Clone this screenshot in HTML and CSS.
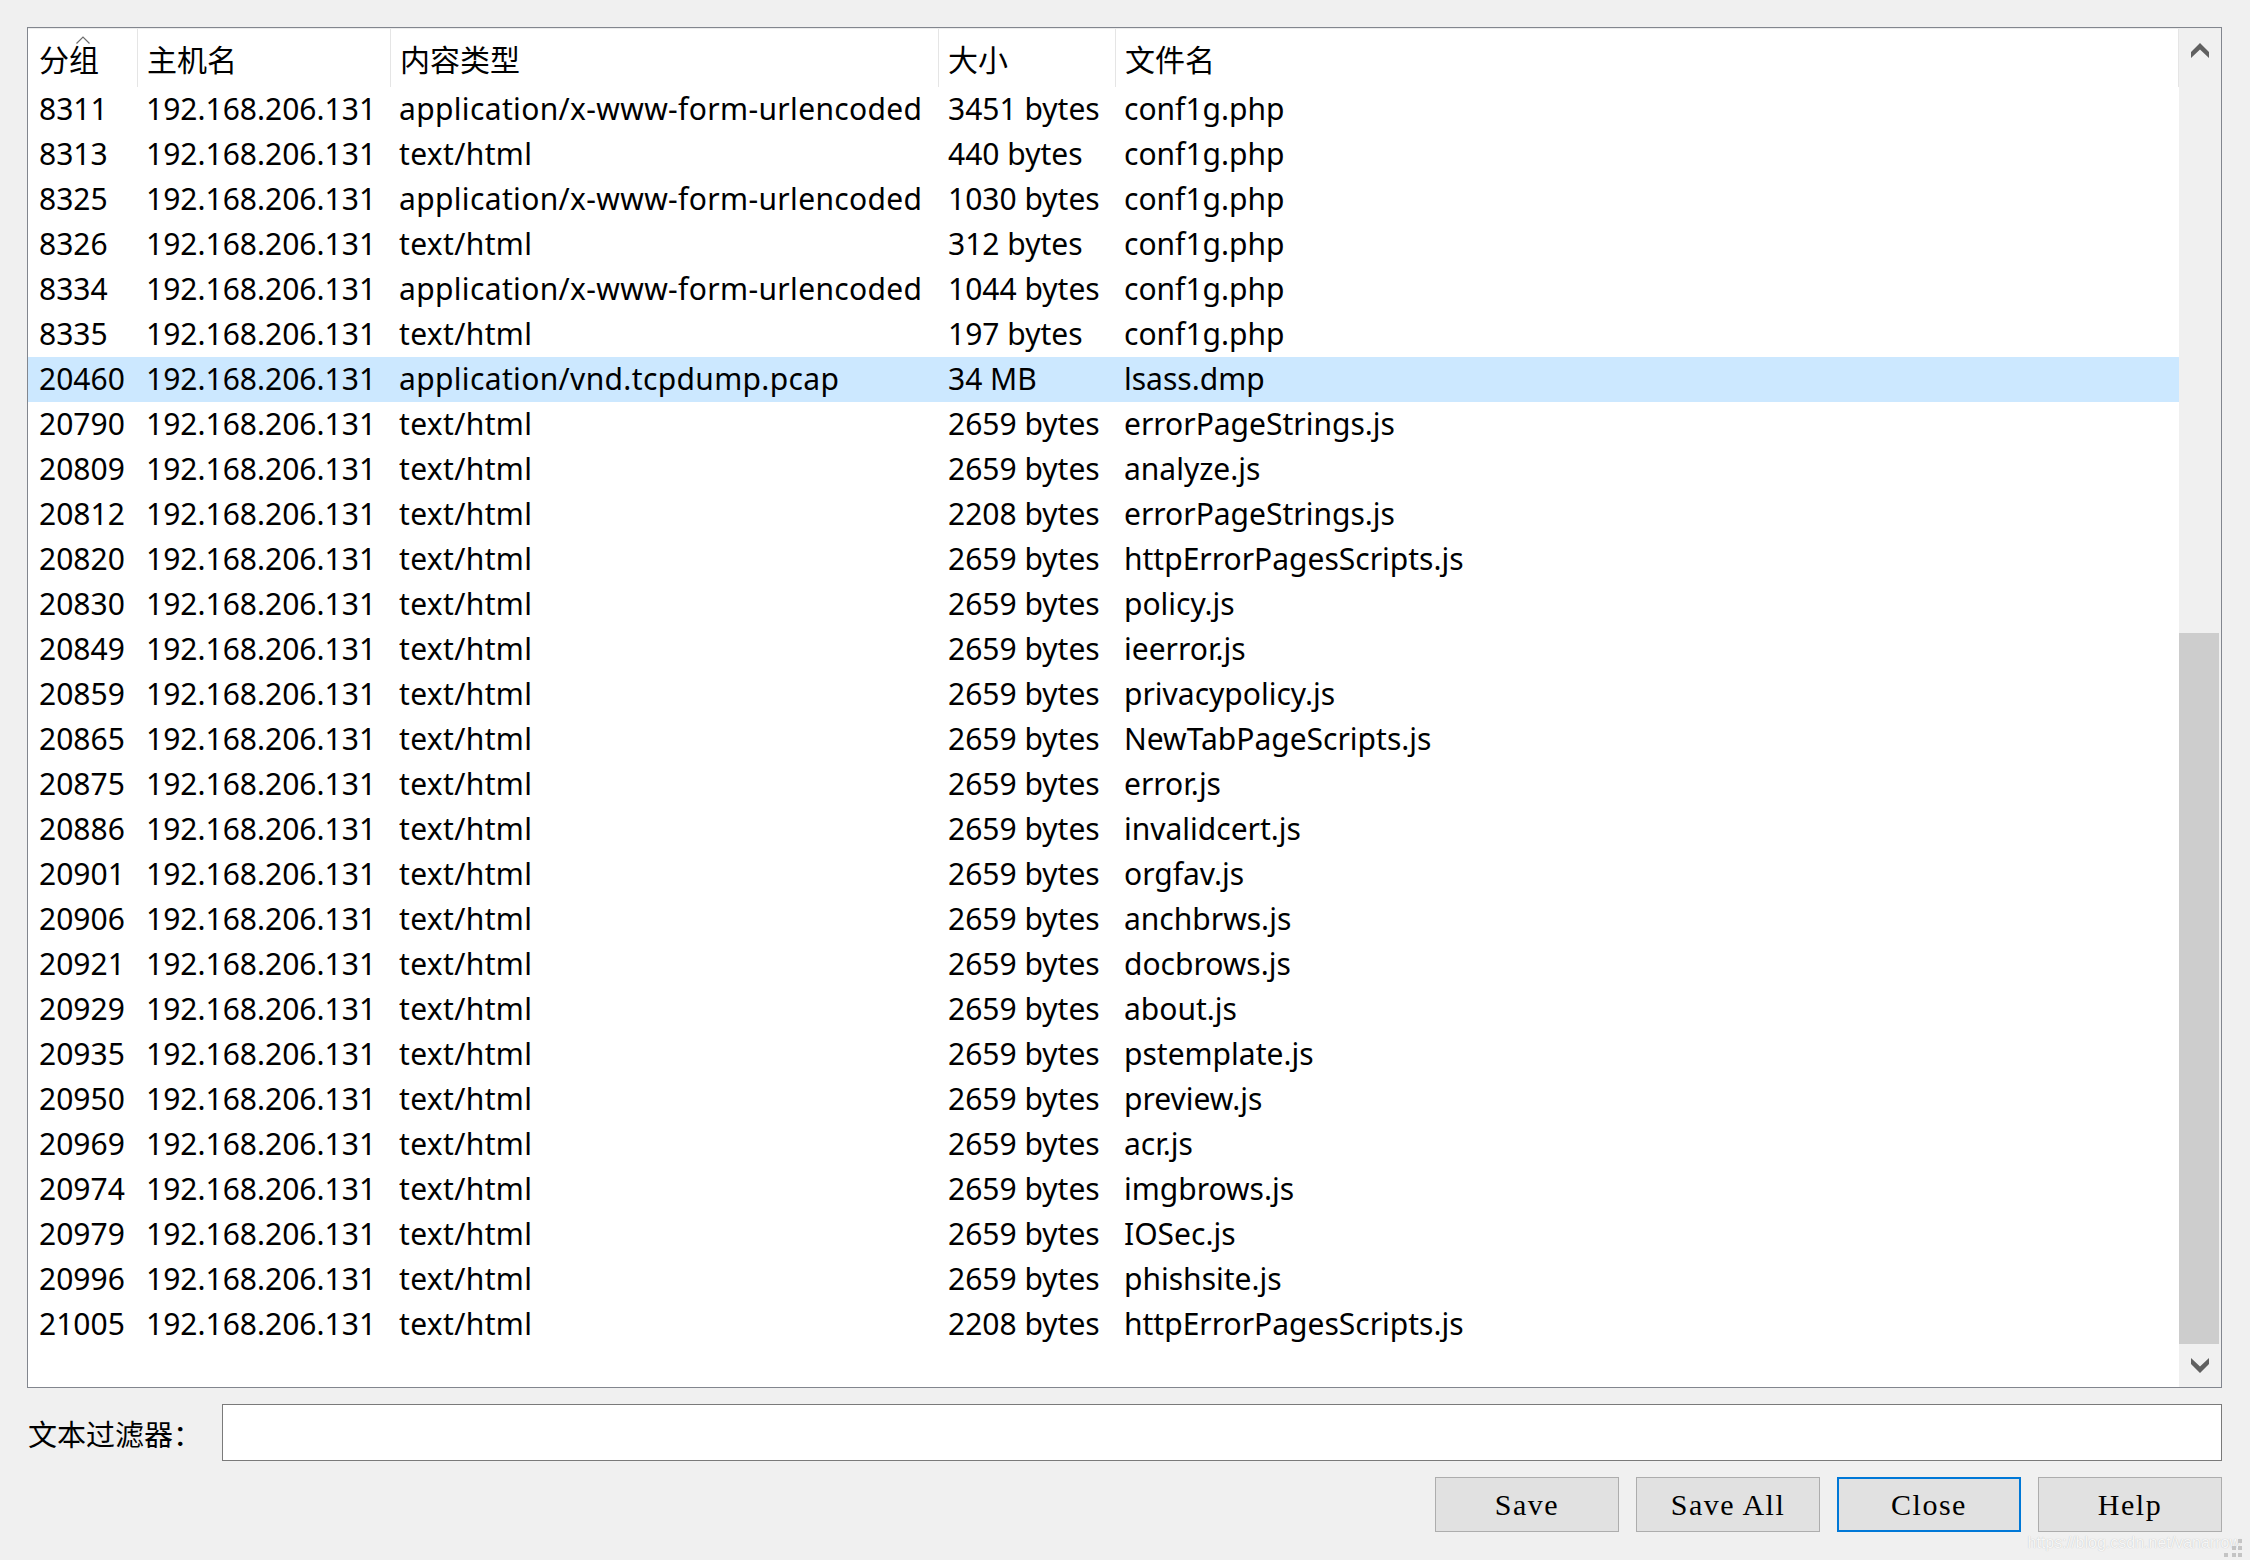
FILE: index.html
```html
<!DOCTYPE html>
<html lang="zh-CN">
<head>
<meta charset="utf-8">
<title>导出 HTTP 对象列表</title>
<link rel="stylesheet" href="styles.css">
</head>
<body>
<div class="dialog">
  <div class="listbox">
    <div class="table">
      <div class="hdr">
        <div class="hc first">分组<svg class="sort" width="14" height="8" viewBox="0 0 14 8"><polyline points="0.5,7.5 7,1 13.5,7.5" fill="none" stroke="#6d6d6d" stroke-width="1.2"/></svg></div>
        <div class="hc">主机名</div>
        <div class="hc">内容类型</div>
        <div class="hc">大小</div>
        <div class="hc">文件名</div>
      </div>
      <div class="row"><div class="c first">8311</div><div class="c">192.168.206.131</div><div class="c">application/x-www-form-urlencoded</div><div class="c">3451 bytes</div><div class="c">conf1g.php</div></div>
      <div class="row"><div class="c first">8313</div><div class="c">192.168.206.131</div><div class="c">text/html</div><div class="c">440 bytes</div><div class="c">conf1g.php</div></div>
      <div class="row"><div class="c first">8325</div><div class="c">192.168.206.131</div><div class="c">application/x-www-form-urlencoded</div><div class="c">1030 bytes</div><div class="c">conf1g.php</div></div>
      <div class="row"><div class="c first">8326</div><div class="c">192.168.206.131</div><div class="c">text/html</div><div class="c">312 bytes</div><div class="c">conf1g.php</div></div>
      <div class="row"><div class="c first">8334</div><div class="c">192.168.206.131</div><div class="c">application/x-www-form-urlencoded</div><div class="c">1044 bytes</div><div class="c">conf1g.php</div></div>
      <div class="row"><div class="c first">8335</div><div class="c">192.168.206.131</div><div class="c">text/html</div><div class="c">197 bytes</div><div class="c">conf1g.php</div></div>
      <div class="row sel"><div class="c first">20460</div><div class="c">192.168.206.131</div><div class="c">application/vnd.tcpdump.pcap</div><div class="c">34 MB</div><div class="c">lsass.dmp</div></div>
      <div class="row"><div class="c first">20790</div><div class="c">192.168.206.131</div><div class="c">text/html</div><div class="c">2659 bytes</div><div class="c">errorPageStrings.js</div></div>
      <div class="row"><div class="c first">20809</div><div class="c">192.168.206.131</div><div class="c">text/html</div><div class="c">2659 bytes</div><div class="c">analyze.js</div></div>
      <div class="row"><div class="c first">20812</div><div class="c">192.168.206.131</div><div class="c">text/html</div><div class="c">2208 bytes</div><div class="c">errorPageStrings.js</div></div>
      <div class="row"><div class="c first">20820</div><div class="c">192.168.206.131</div><div class="c">text/html</div><div class="c">2659 bytes</div><div class="c">httpErrorPagesScripts.js</div></div>
      <div class="row"><div class="c first">20830</div><div class="c">192.168.206.131</div><div class="c">text/html</div><div class="c">2659 bytes</div><div class="c">policy.js</div></div>
      <div class="row"><div class="c first">20849</div><div class="c">192.168.206.131</div><div class="c">text/html</div><div class="c">2659 bytes</div><div class="c">ieerror.js</div></div>
      <div class="row"><div class="c first">20859</div><div class="c">192.168.206.131</div><div class="c">text/html</div><div class="c">2659 bytes</div><div class="c">privacypolicy.js</div></div>
      <div class="row"><div class="c first">20865</div><div class="c">192.168.206.131</div><div class="c">text/html</div><div class="c">2659 bytes</div><div class="c">NewTabPageScripts.js</div></div>
      <div class="row"><div class="c first">20875</div><div class="c">192.168.206.131</div><div class="c">text/html</div><div class="c">2659 bytes</div><div class="c">error.js</div></div>
      <div class="row"><div class="c first">20886</div><div class="c">192.168.206.131</div><div class="c">text/html</div><div class="c">2659 bytes</div><div class="c">invalidcert.js</div></div>
      <div class="row"><div class="c first">20901</div><div class="c">192.168.206.131</div><div class="c">text/html</div><div class="c">2659 bytes</div><div class="c">orgfav.js</div></div>
      <div class="row"><div class="c first">20906</div><div class="c">192.168.206.131</div><div class="c">text/html</div><div class="c">2659 bytes</div><div class="c">anchbrws.js</div></div>
      <div class="row"><div class="c first">20921</div><div class="c">192.168.206.131</div><div class="c">text/html</div><div class="c">2659 bytes</div><div class="c">docbrows.js</div></div>
      <div class="row"><div class="c first">20929</div><div class="c">192.168.206.131</div><div class="c">text/html</div><div class="c">2659 bytes</div><div class="c">about.js</div></div>
      <div class="row"><div class="c first">20935</div><div class="c">192.168.206.131</div><div class="c">text/html</div><div class="c">2659 bytes</div><div class="c">pstemplate.js</div></div>
      <div class="row"><div class="c first">20950</div><div class="c">192.168.206.131</div><div class="c">text/html</div><div class="c">2659 bytes</div><div class="c">preview.js</div></div>
      <div class="row"><div class="c first">20969</div><div class="c">192.168.206.131</div><div class="c">text/html</div><div class="c">2659 bytes</div><div class="c">acr.js</div></div>
      <div class="row"><div class="c first">20974</div><div class="c">192.168.206.131</div><div class="c">text/html</div><div class="c">2659 bytes</div><div class="c">imgbrows.js</div></div>
      <div class="row"><div class="c first">20979</div><div class="c">192.168.206.131</div><div class="c">text/html</div><div class="c">2659 bytes</div><div class="c">IOSec.js</div></div>
      <div class="row"><div class="c first">20996</div><div class="c">192.168.206.131</div><div class="c">text/html</div><div class="c">2659 bytes</div><div class="c">phishsite.js</div></div>
      <div class="row"><div class="c first">21005</div><div class="c">192.168.206.131</div><div class="c">text/html</div><div class="c">2208 bytes</div><div class="c">httpErrorPagesScripts.js</div></div>
    </div>
    <div class="scrollbar">
      <div class="sb-btn"><svg width="18" height="16" viewBox="0 0 18 16"><polygon points="0,10 9,1 18,10 18,16 9,7.5 0,16" fill="#606060"/></svg></div>
      <div class="track"><div class="thumb"></div></div>
      <div class="sb-btn down"><svg width="18" height="16" viewBox="0 0 18 16"><polygon points="0,0 9,8.5 18,0 18,6 9,15 0,6" fill="#606060"/></svg></div>
    </div>
  </div>
  <div class="filter">
    <label class="flabel">文本过滤器：</label>
    <div class="finput"></div>
  </div>
  <div class="buttons">
    <div class="btn">Save</div>
    <div class="btn">Save All</div>
    <div class="btn focus">Close</div>
    <div class="btn">Help</div>
  </div>
  <div class="watermark">https://blog.csdn.net/vanarrow</div>
  <svg class="grip" width="26" height="26" viewBox="0 0 26 26">
    <rect x="14" y="3" width="4" height="4" fill="#c4c4c4"/>
    <rect x="8" y="10" width="4" height="4" fill="#c4c4c4"/>
    <rect x="14" y="10" width="4" height="4" fill="#c4c4c4"/>
    <rect x="0" y="17" width="4" height="4" fill="#c4c4c4"/>
    <rect x="8" y="17" width="4" height="4" fill="#c4c4c4"/>
    <rect x="14" y="17" width="4" height="4" fill="#c4c4c4"/>
  </svg>
</div>
</body>
</html>
```
FILE: styles.css
```css
html, body {
  margin: 0;
  padding: 0;
  background: #f0f0f0;
}
body {
  font-family: "Noto Sans", "Noto Sans CJK SC", sans-serif;
  color: #000;
}
.dialog {
  position: relative;
  width: 2250px;
  height: 1560px;
  box-sizing: border-box;
  padding: 27px 28px 0 27px;
  display: flex;
  flex-direction: column;
  overflow: hidden;
}
.listbox {
  height: 1361px;
  box-sizing: border-box;
  border: 1px solid #82868e;
  padding-top: 1px;
  background: #ececec;
  display: flex;
}
.table {
  flex: 1;
  background: #fff;
  font-size: 30px;
  font-family: "Noto Sans", "Noto Sans CJK SC", sans-serif;
}
.hdr, .row {
  display: grid;
  grid-template-columns: 110px 253px 548px 177px 1fr;
}
.hdr {
  height: 58px;
}
.hc {
  position: relative;
  border-right: 1px solid #e5e5e5;
  line-height: 58px;
  padding-left: 9px;
  white-space: nowrap;
  font-family: "Noto Sans CJK SC", sans-serif;
}
.hc.first { padding-left: 11px; }
.sort {
  position: absolute;
  left: 48px;
  top: 7px;
}
.row {
  height: 45px;
  line-height: 43px;
}
.row.sel { background: #cce8ff; }
.c {
  padding-left: 8px;
  white-space: nowrap;
  overflow: hidden;
}
.c.first { padding-left: 11px; }
.row .c:nth-child(3) { letter-spacing: 0.35px; }
.row .c:nth-child(4) { padding-left: 9px; }
.scrollbar {
  width: 42px;
  background: #f0f0f0;
  display: flex;
  flex-direction: column;
}
.sb-btn {
  height: 42px;
  display: flex;
  align-items: center;
  justify-content: center;
}
.sb-btn.down { height: 43px; }
.track {
  flex: 1;
  display: flex;
  flex-direction: column;
  justify-content: flex-end;
}
.thumb {
  height: 711px;
  width: 40px;
  background: #cdcdcd;
}
.filter {
  margin-top: 16px;
  height: 57px;
  display: flex;
  align-items: center;
}
.flabel {
  width: 195px;
  font-family: "Noto Sans CJK SC", sans-serif;
  font-size: 29px;
  padding-left: 1px;
  box-sizing: border-box;
  white-space: nowrap;
}
.finput {
  flex: 1;
  height: 57px;
  box-sizing: border-box;
  border: 1px solid #7a7a7a;
  background: #fff;
}
.buttons {
  margin-top: 16px;
  display: flex;
  justify-content: flex-end;
  gap: 17px;
}
.btn {
  width: 184px;
  height: 55px;
  box-sizing: border-box;
  border: 1px solid #adadad;
  background: #e1e1e1;
  display: flex;
  align-items: center;
  justify-content: center;
  font-family: "Liberation Serif", serif;
  font-size: 30px;
  letter-spacing: 1.5px;
}
.btn.focus {
  border: 2px solid #0078d7;
}
.watermark {
  position: absolute;
  right: 9px;
  bottom: 8px;
  font-family: "Liberation Sans", sans-serif;
  font-size: 16px;
  color: #f7f7f7;
  text-shadow: 0 0 1px #b8b8b8;
}
.grip {
  position: absolute;
  right: 0;
  bottom: -2px;
}
```
